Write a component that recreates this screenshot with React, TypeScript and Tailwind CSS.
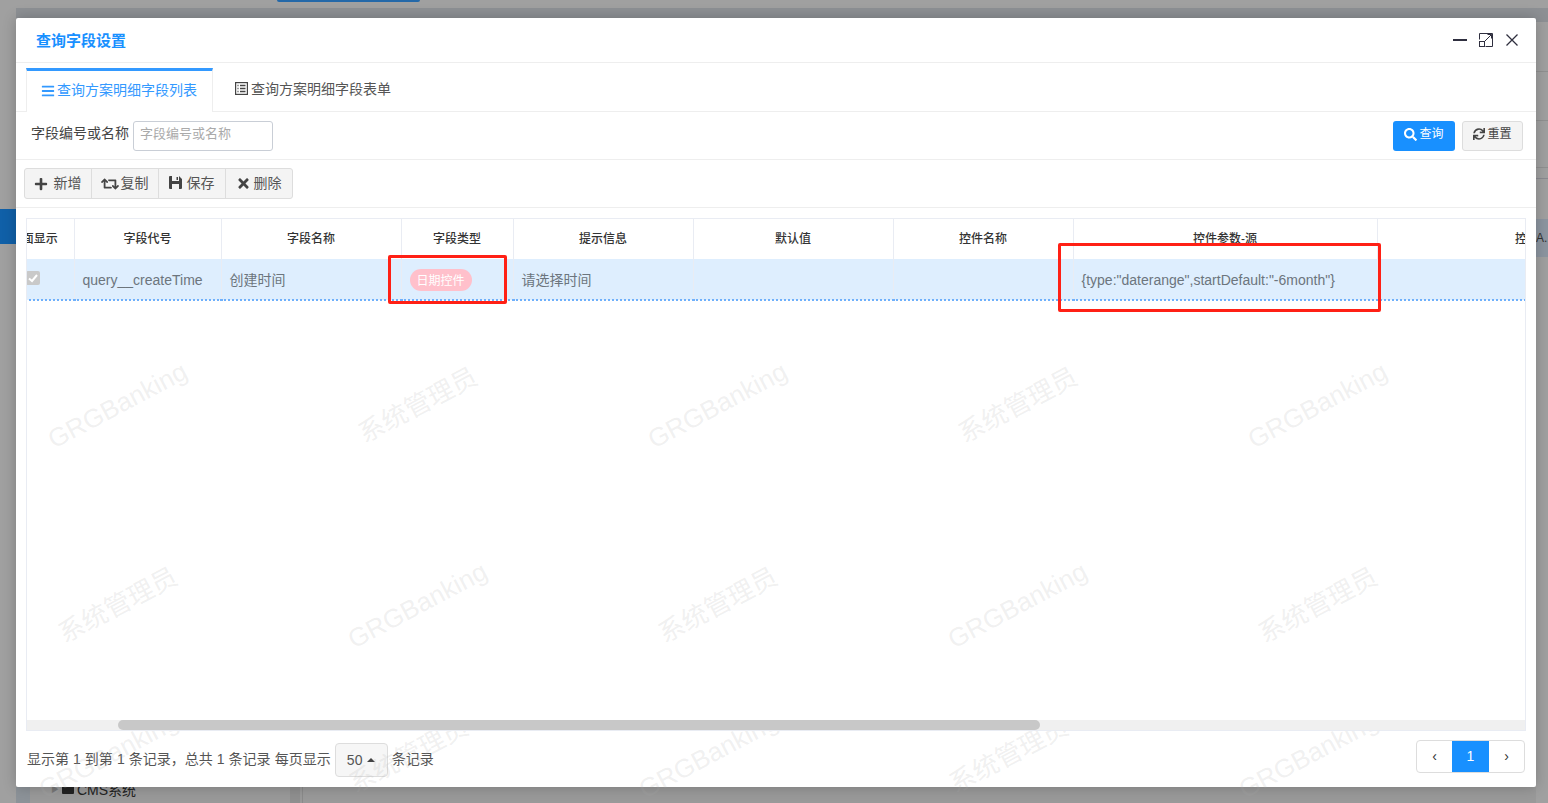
import { FaBars, FaPlus, FaRetweet, FaTimes, FaSearch, FaSync } from 'react-icons/fa'

const COLUMNS = [
  { title: '页面显示', width: 80 },
  { title: '字段代号', width: 147 },
  { title: '字段名称', width: 180 },
  { title: '字段类型', width: 112 },
  { title: '提示信息', width: 180 },
  { title: '默认值', width: 200 },
  { title: '控件名称', width: 180 },
  { title: '控件参数-源', width: 304 },
  { title: '控件', width: 300 },
]

function SaveIcon() {
  return (
    <svg width="13" height="13" viewBox="0 0 13 13" className="-mt-[3px] text-[#444]">
      <path fillRule="evenodd" fill="currentColor" d="M0 1a1 1 0 0 1 1-1h9l3 3v9a1 1 0 0 1-1 1H1a1 1 0 0 1-1-1zM3 0v5h7V0zM7.5 1v3h1.5V1zM3 8v5h7V8z" />
    </svg>
  )
}

function FormIcon() {
  return (
    <svg width="13" height="13" viewBox="0 0 13 13" fill="none" stroke="#444" className="-mt-[2px]">
      <rect x=".6" y=".6" width="11.8" height="11.8" strokeWidth="1.2" />
      <path d="M2.5 3.5h1M5 3.5h5.5M2.5 6.5h1M5 6.5h5.5M2.5 9.5h1M5 9.5h5.5" strokeWidth="1.4" />
    </svg>
  )
}

const TOOLS = [
  { label: '新增', icon: <FaPlus className="text-[14px] text-[#444]" />, gap: 'gap-[6px]', pad: 'pr-[1px]' },
  { label: '复制', icon: <FaRetweet className="text-[18px] text-[#444]" />, gap: 'gap-[2px]', pad: 'pr-[1px]' },
  { label: '保存', icon: <SaveIcon />, gap: 'gap-[5px]', pad: 'pr-[1px]' },
  { label: '删除', icon: <FaTimes className="text-[15px] text-[#444]" />, gap: 'gap-[3px]', pad: 'pr-[1px]' },
]

const G = 'GRGBanking'
const S = '系统管理员'

function Mark({ text }: { text: string }) {
  return (
    <div className="flex h-[200px] w-[300px] items-center justify-center">
      <span className="rotate-[-28deg] whitespace-nowrap text-[26px] text-[rgba(170,170,170,0.18)]">{text}</span>
    </div>
  )
}

function Backdrop() {
  return (
    <div className="absolute inset-0 flex bg-[#a0a0a0]">
      {/* left rail */}
      <div className="flex w-[16px] flex-col">
        <div className="mt-[209px] h-[35px] bg-[#1060a8]" />
      </div>

      {/* page behind the dialog */}
      <div className="flex flex-1 flex-col">
        <div className="ml-[261px] h-[2px] w-[143px] rounded-b-sm bg-[#2468a8]" />
        <div className="mt-[6px] h-[14px] bg-[#8d9094]" />
        <div className="mt-auto flex h-[16px] bg-[#999]">
          <div className="w-[14px] bg-[#8c9298]" />
          <div className="flex w-[260px] items-start pl-[21px] text-[14px] leading-none text-[#222]">
            <span className="-mt-[1px] mr-[3px] text-[8px] text-[#777]">▶</span>
            <span className="mr-[3px] -mt-[2px] h-[9px] w-[12px] rounded-[1px] bg-[#222]" />
            <span className="-mt-[4px]">CMS系统</span>
          </div>
          <div className="w-[10px] bg-[#8f8f8f]" />
          <div className="ml-[2px] w-px bg-[#8a8a8a]" />
        </div>
      </div>

      {/* right rail */}
      <div className="flex w-[12px] flex-col">
        <div className="mt-[8px] h-[14px] bg-[#8d9094]" />
        <div className="mt-[49px] h-px bg-[#909090]" />
        <div className="mt-[48px] h-px bg-[#909090]" />
        <div className="mt-[46px] h-px bg-[#909090]" />
        <div className="mt-[10px] h-px bg-[#8a8a90]" />
        <div className="mt-[40px] flex h-[38px] items-center overflow-hidden whitespace-nowrap bg-[#8c95a0] text-[12px] text-[#333]">A..</div>
      </div>
    </div>
  )
}

function DialogControls() {
  return (
    <div className="flex items-center text-[#2f2f3f]">
      <svg width="14" height="14" viewBox="0 0 14 14" className="mr-[12px]">
        <rect x="0" y="6" width="14" height="2" fill="currentColor" />
      </svg>
      <svg width="14" height="14" viewBox="0 0 14 14" fill="none" stroke="currentColor" strokeWidth="1" className="mr-[13px]">
        <path d="M.5 6.5V.5H13.5V13.5H6.5" />
        <rect x=".5" y="8.5" width="5" height="5" />
        <path d="M6 8L12.5 1.5M8.5 1.5H12.5V5.5" />
      </svg>
      <svg width="12" height="12" viewBox="0 0 12 12" fill="none" stroke="currentColor" strokeWidth="1.3" className="mr-[18px]">
        <path d="M.5 .5L11.5 11.5M11.5 .5L.5 11.5" />
      </svg>
    </div>
  )
}

function FieldTable() {
  return (
    <div className="relative mx-[10px] mt-[10px] flex h-[513px] flex-col overflow-hidden border border-[#e9ecf3]">
      <div className="flex-1 overflow-hidden">
        <table className="-ml-[33px] w-[1683px] table-fixed border-collapse text-left">
          <colgroup>
            {COLUMNS.map(c => <col key={c.title} style={{ width: c.width }} />)}
          </colgroup>
          <thead>
            <tr className="h-[40px]">
              {COLUMNS.map(c => (
                <th key={c.title} className="overflow-hidden whitespace-nowrap border-r border-[#e9ecf3] text-center text-[12px] font-medium text-[#333]">
                  {c.title}
                </th>
              ))}
            </tr>
          </thead>
          <tbody>
            <tr className="h-[41px] border-b-2 border-dotted border-[#6fb0fb] bg-[#deeefe] text-[14px] text-[#6c757d]">
              <td className="border-r border-[#e9ecf3] pb-[2px] text-center">
                <span className="ml-[-1px] inline-flex h-[14px] w-[14px] items-center justify-center rounded-[2px] bg-[#c9c9c9]">
                  <svg width="10" height="10" viewBox="0 0 10 10" fill="none" stroke="#fff" strokeWidth="2"><path d="M1 5.5L4 8L9 2" /></svg>
                </span>
              </td>
              <td className="border-r border-[#e9ecf3] px-[8px] pt-[2px]">query__createTime</td>
              <td className="border-r border-[#e9ecf3] px-[8px] pt-[2px]">创建时间</td>
              <td className="border-r border-[#e9ecf3] px-[8px] pt-[2px]">
                <span className="inline-flex h-[22px] w-[62px] items-center justify-center rounded-full bg-[#ffc0cb] pt-[2px] text-[12px] text-white">日期控件</span>
              </td>
              <td className="border-r border-[#e9ecf3] px-[8px] pt-[2px]">请选择时间</td>
              <td className="border-r border-[#e9ecf3]" />
              <td className="border-r border-[#e9ecf3]" />
              <td className="border-r border-[#e9ecf3] whitespace-nowrap px-[8px] pt-[2px]">{'{type:"daterange",startDefault:"-6month"}'}</td>
              <td />
            </tr>
          </tbody>
        </table>
      </div>
      <div className="h-[10px] shrink-0 bg-[#f0f0f0] pl-[91px]">
        <div className="h-[10px] w-[922px] rounded-[5px] bg-[#c8c8c8]" />
      </div>
    </div>
  )
}

function Footer() {
  return (
    <div className="flex flex-1 items-center justify-between pl-[11px] pr-[11px] text-[14px] text-[#555]">
      <div className="flex items-center">
        <span className="[word-spacing:0.15px]">显示第 1 到第 1 条记录，总共 1 条记录 每页显示</span>
        <span className="mx-[4px] mt-[2px] flex h-[34px] w-[53px] items-center justify-center gap-[5px] rounded-[4px] border border-[#ddd] bg-[#f6f6f6]">
          50
          <span className="h-0 w-0 border-x-[4px] border-b-[4px] border-x-transparent border-b-[#444]" />
        </span>
        <span>条记录</span>
      </div>
      <div className="-mt-[5px] flex h-[33px] w-[109px] overflow-hidden rounded-[4px] border border-[#ddd] text-[14px]">
        <span className="flex flex-1 items-center justify-center text-[#333]">‹</span>
        <span className="flex w-[37px] items-center justify-center bg-[#1890ff] text-white">1</span>
        <span className="flex flex-1 items-center justify-center text-[#333]">›</span>
      </div>
    </div>
  )
}

function Dialog() {
  return (
    <div className="absolute left-[16px] top-[18px] flex h-[769px] w-[1520px] flex-col rounded-[2px] bg-white shadow-[0_0_14px_rgba(0,0,0,0.22)]">
      {/* title */}
      <div className="flex h-[45px] shrink-0 items-center justify-between border-b border-[#eee] pl-[20px]">
        <span className="pt-[3px] text-[15px] font-bold text-[#1890ff]">查询字段设置</span>
        <DialogControls />
      </div>

      {/* tabs */}
      <div className="flex h-[49px] shrink-0 items-end border-b border-[#eee] pl-[10px] text-[14px]">
        <div className="-mb-px flex h-[44px] w-[187px] items-center gap-[2px] border-x border-t-[3px] border-[#eee] border-t-[#3399ff] bg-white pb-[2px] pl-[14px] text-[#3399ff]">
          <FaBars className="text-[14px]" />
          <span>查询方案明细字段列表</span>
        </div>
        <div className="flex h-[43px] items-center gap-[3px] pl-[22px] text-[#555]">
          <FormIcon />
          <span>查询方案明细字段表单</span>
        </div>
      </div>

      {/* search */}
      <div className="flex h-[48px] shrink-0 items-center border-b border-[#eee] pl-[15px] pr-[13px]">
        <span className="pb-[4px] text-[14px] text-[#444]">字段编号或名称</span>
        <input
          placeholder="字段编号或名称"
          className="ml-[4px] h-[30px] w-[140px] rounded-[3px] border border-[#c9ced6] px-[6px] pb-[4px] text-[13px] outline-none placeholder:text-[#aaa]"
        />
        <button className="ml-auto flex h-[30px] w-[62px] items-center justify-center gap-[2px] rounded-[3px] bg-[#1890ff] pb-[3px] text-[12px] text-white">
          <FaSearch className="text-[13px]" />
          查询
        </button>
        <button className="ml-[7px] flex h-[30px] w-[61px] items-center justify-center gap-[2px] rounded-[3px] border border-[#ddd] bg-[#f4f4f4] pb-[3px] text-[12px] text-[#444]">
          <FaSync className="text-[12px]" />
          重置
        </button>
      </div>

      {/* toolbar */}
      <div className="flex h-[48px] shrink-0 items-center border-b border-[#eee] pl-[8px]">
        <div className="flex h-[31px] w-[269px] overflow-hidden rounded-[3px] border border-[#ddd] bg-[#f4f4f4] text-[14px] text-[#555]">
          {TOOLS.map(t => (
            <div key={t.label} className={`flex flex-1 items-center justify-center border-r border-[#ddd] last:border-r-0 ${t.gap} ${t.pad}`}>
              {t.icon}
              <span>{t.label}</span>
            </div>
          ))}
        </div>
      </div>

      <FieldTable />
      <Footer />

      {/* red marks on the screenshot */}
      <div className="absolute left-[372px] top-[237px] h-[49px] w-[119px] rounded-[2px] border-[3px] border-[#ff2015]" />
      <div className="absolute left-[1042px] top-[225px] h-[69px] w-[323px] rounded-[2px] border-[3px] border-[#ff2015]" />
    </div>
  )
}

export default function App() {
  return (
    <div className="relative h-[803px] w-[1548px] overflow-hidden font-['Liberation_Sans','Noto_Sans_CJK_SC',sans-serif]">
      <Backdrop />
      <Dialog />

      {/* watermark */}
      <div className="pointer-events-none absolute left-[-32px] top-[305px] grid grid-cols-[repeat(5,300px)]">
        {[G, S, G, S, G, S, G, S, G, S].map((t, i) => <Mark key={i} text={t} />)}
      </div>
      <div className="pointer-events-none absolute inset-x-0 top-[731px] h-[72px] overflow-hidden">
        <div className="-ml-[41px] -mt-[76px] flex">
          {[G, S, G, S, G, S].map((t, i) => <div key={i} className="shrink-0"><Mark text={t} /></div>)}
        </div>
      </div>
    </div>
  )
}
